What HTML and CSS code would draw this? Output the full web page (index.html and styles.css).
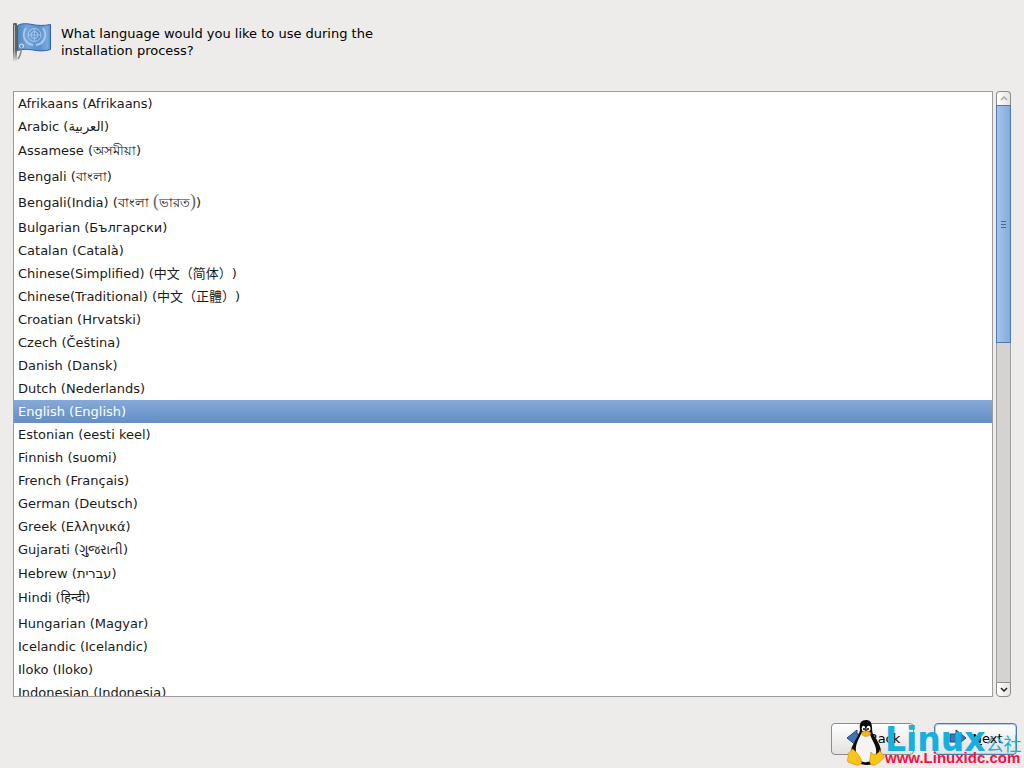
FILE: index.html
```html
<!DOCTYPE html>
<html lang="en">
<head>
  <meta charset="UTF-8" />
  <title>Language selection</title>
  <link rel="stylesheet" href="styles.css">
</head>
<body>
  <header class="header">
    <svg class="flag" viewBox="0 0 40 40" aria-hidden="true">
      <defs>
        <linearGradient id="cloth" x1="0" x2="1">
          <stop offset="0" stop-color="#4f86c6" />
          <stop offset="0.3" stop-color="#74a5da" />
          <stop offset="0.65" stop-color="#5b91cf" />
          <stop offset="0.9" stop-color="#78a9dd" />
          <stop offset="1" stop-color="#5b91cf" />
        </linearGradient>
        <linearGradient id="pole" x1="0" x2="0" y1="0" y2="1">
          <stop offset="0.7" stop-color="#5f615d" />
          <stop offset="1" stop-color="#5f615d" stop-opacity="0" />
        </linearGradient>
      </defs>
      <rect x="0" y="1" width="4" height="39" rx="1" fill="url(#pole)" />
      <rect x="1" y="3" width="1" height="31" fill="#b4b6b1" />
      <path d="M4.500 3.500 C9 1 14 1.500 19 2.500 S31 4 37.500 2.500 V27.500 C31 29.500 26 29 20 28 S10 27 4.500 28.500 Z" fill="url(#cloth)" stroke="#2f62a3" />
      <g fill="none" stroke="#a9c8ea">
        <circle cx="21.500" cy="13" r="6.500" />
        <circle cx="21.500" cy="13" r="3.500" />
        <path d="M13 6 C8 13 12 22 20 23 M30 6 C35 13 31 22 23 23" stroke-width="2" />
        <path d="M15 13 H28 M21.500 7 V19" stroke-width="0.8" />
      </g>
      <circle cx="8.500" cy="24" r="2" fill="none" stroke="#eeeeec" />
      <path d="M8.500 25 C8.500 30 7 34 5 37" fill="none" stroke="#888a85" stroke-width="1.500" />
    </svg>
    <h1 class="question">What language would you like to use during the installation process?</h1>
  </header>

  <main class="chooser">
    <div class="list" role="radiogroup" aria-label="Language">
      <label class="row"><input type="radio" name="lang" value="af">Afrikaans (Afrikaans)</label>
      <label class="row"><input type="radio" name="lang" value="ar">Arabic (<bdi>العربية</bdi>)</label>
      <label class="row row-bengali"><input type="radio" name="lang" value="as">Assamese (অসমীয়া)</label>
      <label class="row row-bengali"><input type="radio" name="lang" value="bn">Bengali (বাংলা)</label>
      <label class="row row-bengali"><input type="radio" name="lang" value="bn_IN">Bengali(India) (বাংলা <span class="paren">(</span>ভারত<span class="paren">)</span>)</label>
      <label class="row"><input type="radio" name="lang" value="bg">Bulgarian (Български)</label>
      <label class="row"><input type="radio" name="lang" value="ca">Catalan (Català)</label>
      <label class="row"><input type="radio" name="lang" value="zh_CN">Chinese(Simplified) (<span class="cjk" lang="zh-CN">中文（简体）</span>)</label>
      <label class="row"><input type="radio" name="lang" value="zh_TW">Chinese(Traditional) (<span class="cjk" lang="zh-CN">中文（正體）</span>)</label>
      <label class="row"><input type="radio" name="lang" value="hr">Croatian (Hrvatski)</label>
      <label class="row"><input type="radio" name="lang" value="cs">Czech (Čeština)</label>
      <label class="row"><input type="radio" name="lang" value="da">Danish (Dansk)</label>
      <label class="row"><input type="radio" name="lang" value="nl">Dutch (Nederlands)</label>
      <label class="row"><input type="radio" name="lang" value="en" checked>English (English)</label>
      <label class="row"><input type="radio" name="lang" value="et">Estonian (eesti keel)</label>
      <label class="row"><input type="radio" name="lang" value="fi">Finnish (suomi)</label>
      <label class="row"><input type="radio" name="lang" value="fr">French (Français)</label>
      <label class="row"><input type="radio" name="lang" value="de">German (Deutsch)</label>
      <label class="row"><input type="radio" name="lang" value="el">Greek (Ελληνικά)</label>
      <label class="row row-gujarati"><input type="radio" name="lang" value="gu">Gujarati (ગુજરાતી)</label>
      <label class="row"><input type="radio" name="lang" value="he">Hebrew (<bdi>עברית</bdi>)</label>
      <label class="row row-hindi"><input type="radio" name="lang" value="hi">Hindi (हिन्दी)</label>
      <label class="row"><input type="radio" name="lang" value="hu">Hungarian (Magyar)</label>
      <label class="row"><input type="radio" name="lang" value="is">Icelandic (Icelandic)</label>
      <label class="row"><input type="radio" name="lang" value="ilo">Iloko (Iloko)</label>
      <label class="row"><input type="radio" name="lang" value="id">Indonesian (Indonesia)</label>
    </div>
    <div class="scrollbar">
      <button class="stepper stepper-up" type="button" aria-label="Scroll up" disabled>
        <svg viewBox="0 0 8 5"><path d="M1 4 L4 1 L7 4" /></svg>
      </button>
      <div class="thumb"><span></span><span></span><span></span></div>
      <div class="trough"></div>
      <button class="stepper stepper-down" type="button" aria-label="Scroll down">
        <svg viewBox="0 0 8 5"><path d="M1 1 L4 4 L7 1" /></svg>
      </button>
    </div>
  </main>

  <footer class="footer">
    <button class="btn" type="button">
      <svg class="arrow" viewBox="0 0 20 20"><path d="M12 2 V6 H18 V14 H12 V18 L2 10 Z" /></svg>
      <span><u>B</u>ack</span>
    </button>
    <button class="btn btn-default" type="button">
      <svg class="arrow" viewBox="0 0 20 20"><path d="M8 2 V6 H2 V14 H8 V18 L18 10 Z" /></svg>
      <span><u>N</u>ext</span>
    </button>
  </footer>

  <div class="watermark">
    <svg class="tux" viewBox="0 0 38 46" aria-hidden="true">
      <path d="M19 0 C14 0 12 4 13 9 C13 14 9 18 7 23 C4 28 3 32 5 37 C8 43 14 45 20 45 C28 45 34 39 34 32 C34 25 29 19 26 14 C24 9 27 0 19 0 Z" fill="#0b0b0b" />
      <path d="M14 14 C12 19 8 24 9 32 C10 40 15 43 20 42 C27 41 30 35 29 29 C28 23 24 19 23 14 Z" fill="#f4f4f4" />
      <ellipse cx="16.500" cy="8.500" rx="1.800" ry="2.800" fill="#fff" />
      <ellipse cx="21.500" cy="8.500" rx="2" ry="2.800" fill="#fff" />
      <circle cx="17" cy="9" r="1" />
      <circle cx="21" cy="9" r="1" />
      <path d="M14 13 C17 10 21 10 24 13 C23 17 16 18 14 13 Z" fill="#f5b50c" stroke="#b57d08" stroke-width="0.5" />
      <path d="M5 29 C8 30 12 35 14 39 C16 43 13 46 9 45 L1 42 C-1 40 2 38 1 35 C1 32 3 33 5 29 Z" fill="#fcc419" stroke="#c58a09" stroke-width="0.600" />
      <path d="M24 32 C26 36 31 35 33 30 C34 34 38 36 37 38 C34 40 31 44 28 45 C24 46 22 43 23 39 Z" fill="#fcc419" stroke="#c58a09" stroke-width="0.600" />
    </svg>
    <div class="brand">
      <div class="brand-name">Linux<span class="brand-cjk" lang="zh-CN">公社</span></div>
      <div class="brand-url">www.Linuxidc.com</div>
    </div>
  </div>
</body>
</html>
```
FILE: styles.css
```css
:root {
  --window: #edeceb;
  --border: #9d9c9b;
  --accent: #86a9d8;
  --accent-dark: #648ec4;
  --accent-border: #4f78b0;
  --text: #1a1a1a;
}

*, *::before, *::after {
  box-sizing: border-box;
}

body {
  margin: 0;
  height: 100vh;
  display: flex;
  flex-direction: column;
  position: relative;
  overflow: hidden;
  background: var(--window);
  color: var(--text);
  font-family: "DejaVu Sans", "Noto Sans", sans-serif;
  font-size: 13px;
}

.header {
  display: flex;
  align-items: flex-start;
  gap: 8px;
  padding: 22px 13px 29px;
}

.flag {
  width: 40px;
  height: 40px;
}

.question {
  margin: 3px 0 0;
  max-width: 340px;
  font-size: 13px;
  font-weight: normal;
  line-height: 17px;
  color: #000;
}

.chooser {
  flex: 1;
  min-height: 0;
  display: flex;
  gap: 3px;
  padding: 0 13px;
}

.list {
  flex: 1;
  overflow-y: auto;
  scrollbar-width: none;
  background: #fff;
  border: 1px solid var(--border);
}

.row {
  display: block;
  height: 23px;
  padding: 0 4px;
  line-height: 23px;
  white-space: pre;
}

/* scripts with taller glyphs get taller rows */
.row-bengali {
  height: 26px;
  line-height: 25px;
}

.row-gujarati {
  height: 24px;
}

.row-hindi {
  height: 27px;
  line-height: 25px;
}

.row input {
  appearance: none;
  width: 0;
  height: 0;
  margin: 0;
}

.row:has(input:checked) {
  background: linear-gradient(var(--accent), var(--accent-dark));
  color: #fff;
}

.paren {
  font-family: "Liberation Serif", serif;
  font-size: 18px;
  line-height: 16px;
  color: #666;
}

.cjk {
  font-family: "Noto Sans CJK SC", sans-serif;
  line-height: 16px;
  text-spacing-trim: space-all;
}

.scrollbar {
  width: 15px;
  display: flex;
  flex-direction: column;
}

.stepper {
  height: 15px;
  padding: 0;
  display: flex;
  align-items: center;
  justify-content: center;
  background: linear-gradient(to right, #fff, #e4e3e1);
  border: 1px solid #8e8c88;
}

.stepper-up {
  height: 14px;
  border-bottom: 0;
  border-radius: 4px 4px 0 0;
}

.stepper-down {
  border-radius: 0 0 4px 4px;
}

.stepper svg {
  width: 8px;
  height: 5px;
  fill: none;
  stroke: #222;
  stroke-width: 1.5;
}

.stepper:disabled svg {
  stroke: #aaa;
}

.thumb {
  flex: 236;
  display: flex;
  flex-direction: column;
  align-items: center;
  justify-content: center;
  gap: 2px;
  background: linear-gradient(to right, #a5c4ec, #86aadb);
  border: 1px solid var(--accent-border);
}

.thumb span {
  width: 5px;
  height: 1px;
  background: #45689c;
}

.trough {
  flex: 339;
  background: #d5d3d1;
  border: solid #9d9c9b;
  border-width: 0 1px;
}

.footer {
  display: flex;
  justify-content: flex-end;
  gap: 20px;
  padding: 26px 7px 13px;
}

.btn {
  display: flex;
  align-items: center;
  justify-content: center;
  gap: 4px;
  width: 83px;
  height: 32px;
  padding: 0 0 2px;
  border: 1px solid #8e8c88;
  border-radius: 4px;
  background: linear-gradient(#fff, #f1f0ef 50%, #e2e1df);
  color: #000;
  font: inherit;
}

.btn-default {
  border-color: var(--accent-border);
  box-shadow: inset 0 0 0 1px #b6cdec;
}

.arrow {
  width: 20px;
  height: 20px;
  fill: #4174b5;
  stroke: #24477c;
}

.watermark {
  position: absolute;
  right: 4px;
  bottom: 2px;
  display: flex;
}

.tux {
  width: 38px;
  height: 46px;
}

.brand {
  width: 135px;
}

.brand-name {
  height: 31px;
  font-size: 33px;
  font-weight: bold;
  line-height: 39px;
  white-space: nowrap;
  color: #14b0e0;
}

.brand-cjk {
  font-family: "Noto Sans CJK SC", sans-serif;
  font-size: 18px;
  font-weight: normal;
  line-height: 20px;
}

.brand-url {
  font-family: "Liberation Sans", Arial, sans-serif;
  font-size: 15px;
  font-weight: bold;
  line-height: 14px;
  color: #ff0b3f;
}
```
